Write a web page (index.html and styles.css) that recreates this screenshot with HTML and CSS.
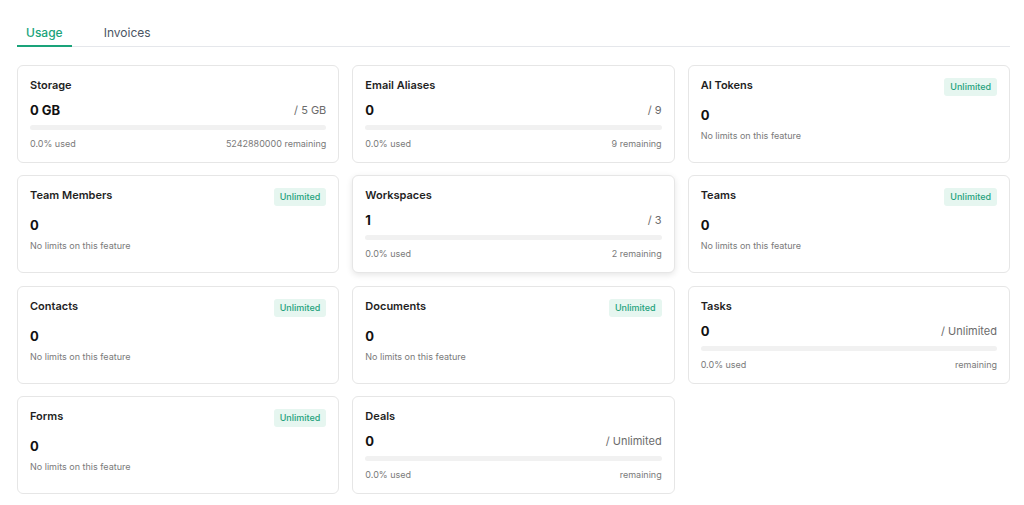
FILE: index.html
```html
<!DOCTYPE html>
<html>

<head>
    <meta charset="UTF-8">
    <title>Usage</title>
    <link rel="stylesheet" href="styles.css">
</head>

<body>
    <div class="page">
        <ul class="tabs">
            <li class="active">Usage</li>
            <li>Invoices</li>
        </ul>

        <div class="grid">
            <div class="card">
                <div class="head"><h5>Storage</h5></div>
                <div class="row"><b>0 GB</b><span>/ 5 GB</span></div>
                <div class="bar"></div>
                <div class="foot"><span>0.0% used</span><span>5242880000 remaining</span></div>
            </div>
            <div class="card">
                <div class="head"><h5>Email Aliases</h5></div>
                <div class="row"><b>0</b><span>/ 9</span></div>
                <div class="bar"></div>
                <div class="foot"><span>0.0% used</span><span>9 remaining</span></div>
            </div>
            <div class="card free">
                <div class="head"><h5>AI Tokens</h5><em>Unlimited</em></div>
                <div class="row"><b>0</b></div>
                <p>No limits on this feature</p>
            </div>

            <div class="card free">
                <div class="head"><h5>Team Members</h5><em>Unlimited</em></div>
                <div class="row"><b>0</b></div>
                <p>No limits on this feature</p>
            </div>
            <div class="card hover">
                <div class="head"><h5>Workspaces</h5></div>
                <div class="row"><b>1</b><span>/ 3</span></div>
                <div class="bar"></div>
                <div class="foot"><span>0.0% used</span><span>2 remaining</span></div>
            </div>
            <div class="card free">
                <div class="head"><h5>Teams</h5><em>Unlimited</em></div>
                <div class="row"><b>0</b></div>
                <p>No limits on this feature</p>
            </div>

            <div class="card free">
                <div class="head"><h5>Contacts</h5><em>Unlimited</em></div>
                <div class="row"><b>0</b></div>
                <p>No limits on this feature</p>
            </div>
            <div class="card free">
                <div class="head"><h5>Documents</h5><em>Unlimited</em></div>
                <div class="row"><b>0</b></div>
                <p>No limits on this feature</p>
            </div>
            <div class="card">
                <div class="head"><h5>Tasks</h5></div>
                <div class="row"><b>0</b><span>/ Unlimited</span></div>
                <div class="bar"></div>
                <div class="foot"><span>0.0% used</span><span>remaining</span></div>
            </div>

            <div class="card free">
                <div class="head"><h5>Forms</h5><em>Unlimited</em></div>
                <div class="row"><b>0</b></div>
                <p>No limits on this feature</p>
            </div>
            <div class="card">
                <div class="head"><h5>Deals</h5></div>
                <div class="row"><b>0</b><span>/ Unlimited</span></div>
                <div class="bar"></div>
                <div class="foot"><span>0.0% used</span><span>remaining</span></div>
            </div>
        </div>
    </div>
</body>

</html>
```

FILE: styles.css
```css
* {
    margin: 0;
    padding: 0;
    box-sizing: border-box;
}

body {
    font-family: Inter, "Noto Sans", sans-serif;
    background: #fff;
    color: #1f1f1f;
}

.page {
    padding: 17px 14px 0 17px;
}

.tabs {
    display: flex;
    list-style: none;
    border-bottom: 1px solid #e5e7eb;
    gap: 23px;
}

.tabs li {
    padding: 8px 9px 5px;
    font-size: 12px;
    line-height: 15px;
    color: #4b5563;
    border-bottom: 2px solid transparent;
    margin-bottom: -1px;
}

.tabs li.active {
    color: #1aa37a;
    border-bottom-color: #1aa37a;
    font-weight: 500;
}

.grid {
    display: grid;
    grid-template-columns: repeat(3, 1fr);
    grid-auto-rows: 98px;
    gap: 12.4px 13px;
    margin-top: 18px;
}

.card {
    border: 1px solid #e6e6e6;
    border-radius: 6px;
    padding: 12px 12px;
    background: #fff;
}

.card.hover {
    box-shadow: 0 2px 6px rgba(0, 0, 0, 0.1);
}

.head {
    display: flex;
    justify-content: space-between;
    align-items: flex-start;
}

.head h5 {
    font-size: 11px;
    line-height: 14px;
    font-weight: 600;
    color: #1f1f1f;
}

.head em {
    font-style: normal;
    font-size: 9px;
    font-weight: 500;
    line-height: 18px;
    padding: 0 6px;
    border-radius: 3px;
    background: #e6f6f0;
    color: #1ea27c;
}

.row {
    display: flex;
    justify-content: space-between;
    align-items: center;
    margin-top: 9px;
    line-height: 18px;
}

.row b {
    font-size: 13px;
    font-weight: 700;
    color: #111;
}

.row span {
    font-size: 11px;
    color: #6b6b6b;
}

.free .row {
    margin-top: 10px;
}

.bar {
    height: 5px;
    margin-top: 6px;
    border-radius: 3px;
    background: #f1f1f1;
}

.foot {
    display: flex;
    justify-content: space-between;
    margin-top: 8px;
    font-size: 9px;
    line-height: 12px;
    color: #7a7a7a;
}

.card p {
    margin-top: 6px;
    font-size: 9px;
    line-height: 12px;
    color: #7a7a7a;
}
```
